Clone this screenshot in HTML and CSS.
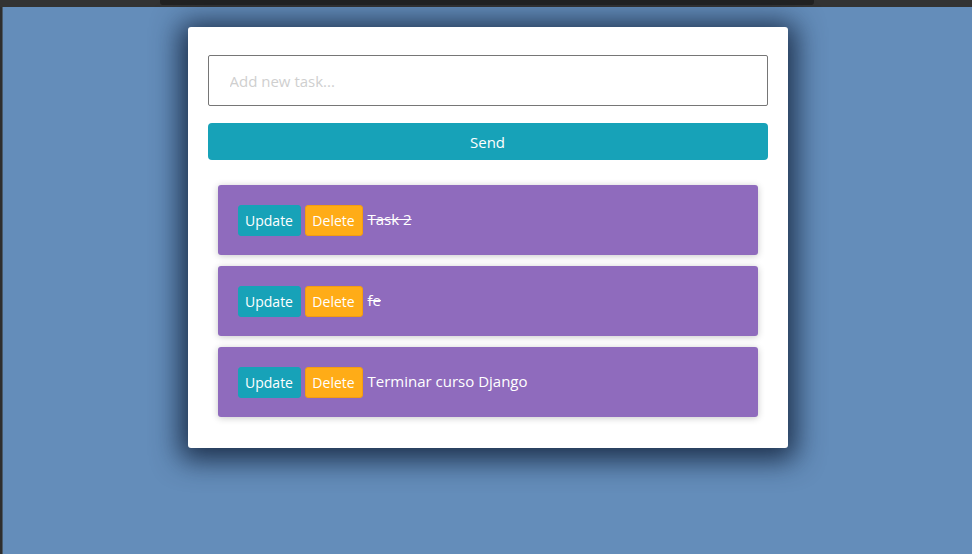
FILE: index.html
```html
<!DOCTYPE html>
<html>
<head>
<meta charset="utf-8">
<link rel="stylesheet" href="styles.css">
</head>
<body>
<div class="topbar"><div class="topbar-inner"></div></div>
<div class="frame">
  <div class="edge"></div>
  <main class="stage">
    <div class="card">
      <input class="task-input" type="text" placeholder="Add new task...">
      <button class="send">Send</button>
      <ul class="list">
        <li class="item"><button class="btn update">Update</button><button class="btn delete">Delete</button><span class="title done">Task 2</span></li>
        <li class="item"><button class="btn update">Update</button><button class="btn delete">Delete</button><span class="title done">fe</span></li>
        <li class="item"><button class="btn update">Update</button><button class="btn delete">Delete</button><span class="title">Terminar curso Django</span></li>
      </ul>
    </div>
  </main>
</div>
</body>
</html>
```

FILE: styles.css
```css
* { box-sizing: border-box; }
html, body { margin: 0; height: 100%; }
body {
  font-family: "Open Sans", "Noto Sans", sans-serif;
  background: #648dba;
  display: flex;
  flex-direction: column;
  overflow: hidden;
}
.topbar {
  height: 7px;
  background: #333333;
  display: flex;
  padding-left: 160px;
  flex-shrink: 0;
}
.topbar-inner {
  width: 654px;
  height: 5px;
  background: #222222;
  border-radius: 0 0 3px 3px;
}
.frame {
  flex: 1;
  display: flex;
}
.edge {
  width: 3px;
  background: #2e2e2e;
  border-right: 1px solid #4a5a6a;
}
.stage {
  flex: 1;
  display: flex;
  justify-content: center;
  padding-top: 20px;
}
.card {
  width: 600px;
  height: 421px;
  background: #ffffff;
  border-radius: 3px;
  box-shadow: 0 4px 28px 8px rgba(15, 30, 55, 0.85);
  padding: 28px 20px 31px;
  display: flex;
  flex-direction: column;
}
.task-input {
  height: 51px;
  width: 100%;
  border: 1px solid #767676;
  border-radius: 2px;
  padding: 0 21px;
  font-family: inherit;
  font-size: 15px;
  outline: none;
}
.task-input::placeholder { color: #cfcfcf; }
.send {
  margin-top: 17px;
  height: 37px;
  width: 100%;
  border: none;
  border-radius: 4px;
  background: #17a2b8;
  color: #ffffff;
  font-family: inherit;
  font-size: 15px;
  padding: 0;
}
.list {
  list-style: none;
  margin: 25px 10px 0;
  padding: 0;
  display: flex;
  flex-direction: column;
  gap: 11px;
}
.item {
  height: 70px;
  background: #8f6bbd;
  border-radius: 3px;
  box-shadow: 0 1px 7px rgba(0, 0, 0, 0.22);
  display: flex;
  align-items: center;
  padding: 0 20px;
  gap: 4px;
}
.btn {
  height: 31px;
  border-radius: 3px;
  color: #ffffff;
  font-family: inherit;
  font-size: 14px;
  padding: 0;
  margin-top: 1px;
}
.update { background: #17a2b8; border: 1px solid #17a2b8; width: 63px; }
.delete { background: #ffac17; border: 1px solid #f39c12; width: 58px; }
.title {
  color: #ffffff;
  font-size: 15px;
  margin-left: 1px;
  margin-top: -3px;
}
.done { text-decoration: line-through; }
```
